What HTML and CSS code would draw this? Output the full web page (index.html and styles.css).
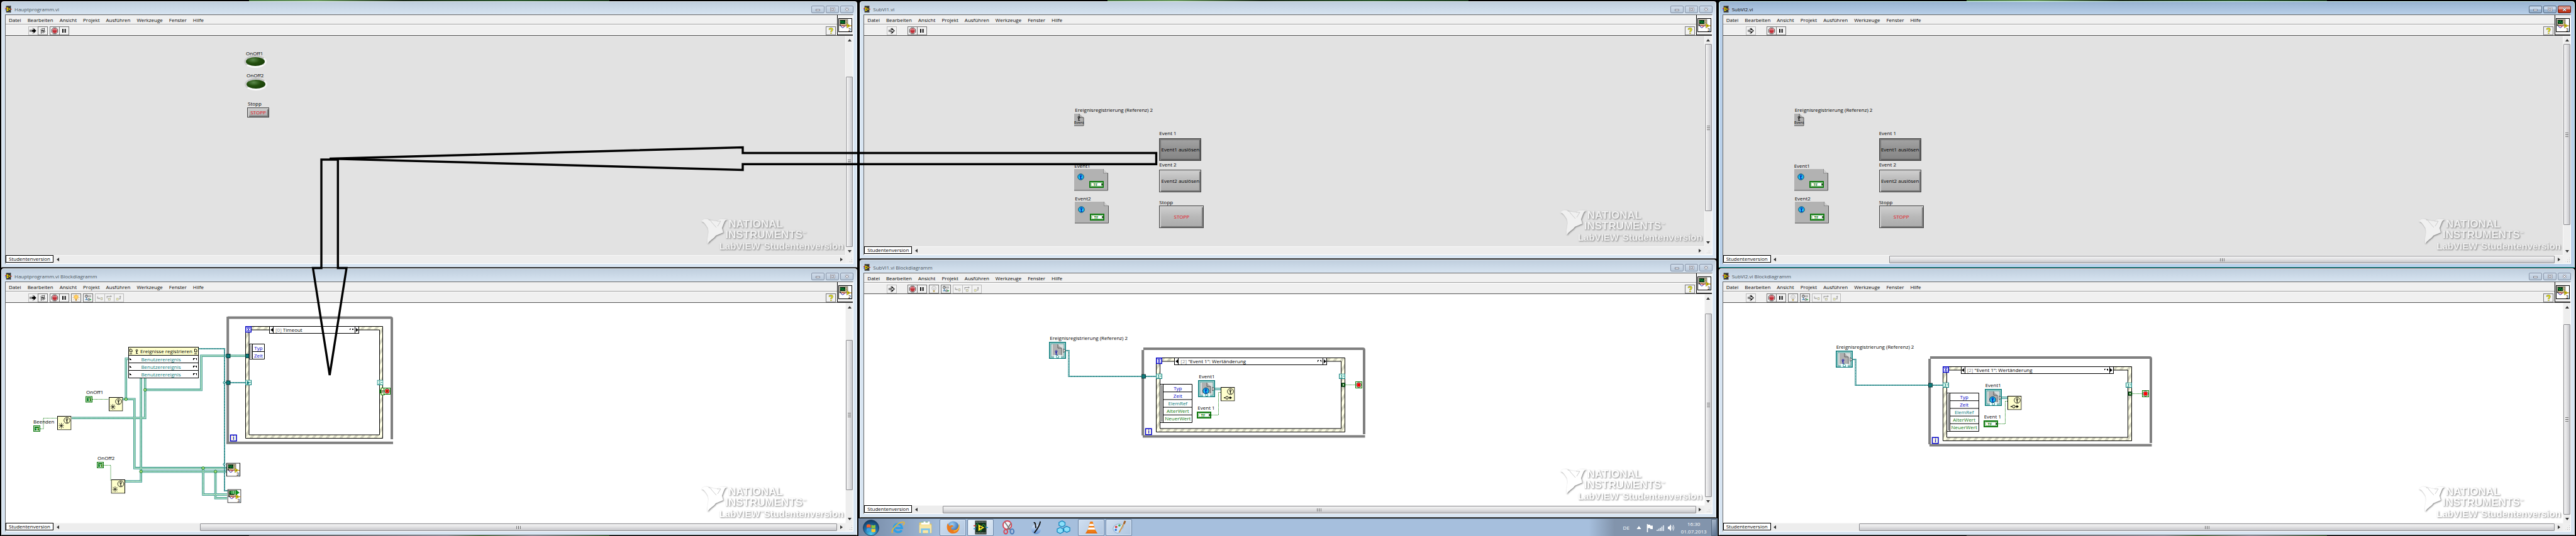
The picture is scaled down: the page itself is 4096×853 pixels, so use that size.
FILE: index.html
```html
<!DOCTYPE html>
<html lang="de">
<head>
<meta charset="utf-8">
<title>LabVIEW Desktop</title>
<link rel="stylesheet" href="styles.css">
</head>
<body>
<svg class="defs" aria-hidden="true">
  <defs>
    <pattern id="stripes" width="9" height="9" patternUnits="userSpaceOnUse" patternTransform="rotate(35)">
      <rect width="9" height="9" fill="#ffffe6"/><rect width="4" height="9" fill="#d6d6c2"/>
    </pattern>
    <radialGradient id="orb" cx=".5" cy=".9" r=".9"><stop offset="0" stop-color="#4fd0f0"/><stop offset=".5" stop-color="#1f6ea8"/><stop offset="1" stop-color="#12395f"/></radialGradient>
    <radialGradient id="globe" cx=".4" cy=".3" r=".8"><stop offset="0" stop-color="#9fd2f5"/><stop offset="1" stop-color="#1c50a0"/></radialGradient>
    <linearGradient id="wm" x1="0" y1="0" x2="0" y2="1"><stop offset="0" stop-color="#dbe9fa"/><stop offset="1" stop-color="#5f8fd0"/></linearGradient>
  </defs>
  <symbol id="logo" viewBox="0 0 10 10">
    <path d="M1.5 0h7v10h-7z" fill="#333"/><path d="M2 .6h6M2 9.4h6" stroke="#bbb" stroke-width=".7" stroke-dasharray=".8 .7"/>
    <path d="M2.5 2l5.5 3-5.5 3.2z" fill="#ffe600"/><path d="M0 4h2M8 5h2" stroke="#d22" stroke-width="1"/><path d="M0 6h2" stroke="#24d" stroke-width="1"/><path d="M3.4 5h2.6M4.7 3.8v2.4" stroke="#222" stroke-width=".8"/>
  </symbol>
  <symbol id="vi" viewBox="0 0 22 22">
    <rect x=".5" y=".5" width="21" height="21" fill="#fff" stroke="#000"/>
    <rect x="2" y="2" width="13" height="10" fill="#c8b890" stroke="#444" stroke-width=".6"/><rect x="3" y="3" width="8" height="6" fill="#021"/>
    <path d="M3 7l1.5-3 1.5 4 1.5-4 1.5 4L11 5" fill="none" stroke="#1c4" stroke-width=".7"/><path d="M12.5 4h1M12.5 6.5h1" stroke="#333"/>
    <path d="M3 10v2M2 11h2" stroke="#000" stroke-width=".8"/><path d="M4 12c1 4 5 4 6 0" fill="none" stroke="#22a"/><path d="M5 13l2-2 1 2 4-1" fill="none" stroke="#d22" stroke-width=".9"/>
    <path d="M13.500 8.500v7l6-3.500z" fill="#ffe600" stroke="#443" stroke-width=".5"/><path d="M19 12h2" stroke="#d80"/><path d="M14.500 12h2.400M15.700 11v2" stroke="#222" stroke-width=".6"/>
  </symbol>
  <symbol id="run" viewBox="0 0 15 14"><path d="M5 5h3V2l5 5-5 5V9H5z" fill="#000"/><path d="M1.500 5v4M3.500 5v4M6 2.500h1M6 11.500h1" stroke="#000"/></symbol>
  <symbol id="subrun" viewBox="0 0 15 14"><path d="M5 5.500h3V3l4.200 4L8 11V8.500H5" fill="#fff" stroke="#000" stroke-width="1.300"/><path d="M2.500 5v4M4.300 5v4M5.500 3h2M5.500 11.500h2" stroke="#000" stroke-width=".9"/></symbol>
  <symbol id="loop" viewBox="0 0 15 14"><path d="M4 6c0-3 3-4 5-2.500L10.500 2v4.500H6.500L8 5C7 4.500 6 5 6 6.500zM11.500 7.500c0 3-3 4-5 2.500L4.500 12V7.500H9L7.500 9c1 .5 2 0 2-1.500z" fill="#fff" stroke="#000" stroke-width=".8"/></symbol>
  <symbol id="abort" viewBox="0 0 15 14"><path d="M5 1.500h5l3 3v5l-3 3H5l-3-3v-5z" fill="#fff" stroke="#111" stroke-width=".9"/><path d="M5.500 2.700h4l2.200 2.200v4.200l-2.200 2.200h-4L3.300 9.100V4.900z" fill="#c03038"/><path d="M5.500 2.700h4l2.200 2.200V6H3.300V4.900z" fill="#d87078"/></symbol>
  <symbol id="pause" viewBox="0 0 15 14"><path d="M4 3.500h2.200v7H4zM8.300 3.500h2.200v7H8.300z" fill="#000"/></symbol>
  <symbol id="bulb" viewBox="0 0 15 14"><path d="M1.500 2l2 1.500M13.500 2l-2 1.500M1 6.500h2M12 6.500h2M2 10.500l2-1.500M13 10.500L11 9" stroke="#e8a030" stroke-width=".7"/><path d="M5.500 9C2 6 4 1.500 7.500 1.500S13 6 9.500 9z" fill="#ffcf60" stroke="#e09020" stroke-width=".6"/><path d="M6 9.500h3v3H6z" fill="#c09040"/></symbol>
  <symbol id="bulboff" viewBox="0 0 15 14"><path d="M5.500 9C2 6 4 1.500 7.500 1.500S13 6 9.500 9z" fill="#eee" stroke="#999" stroke-width=".7"/><path d="M6 9.500h3v3H6z" fill="#c0a860"/><path d="M6 4l1.500 4L9 4" fill="none" stroke="#aaa" stroke-width=".6"/></symbol>
  <symbol id="retain" viewBox="0 0 15 14"><circle cx="4.500" cy="4" r="2.300" fill="#fff" stroke="#111" stroke-width=".9"/><path d="M4.500 4V2.500M4.500 4h1.300" stroke="#111" stroke-width=".6"/><rect x="8.500" y="3" width="4" height="2.600" fill="#ccc" stroke="#777" stroke-width=".6"/><path d="M4.500 6.300v4M2 10.300h5" stroke="#16a" stroke-width="1"/><rect x="7.500" y="8.600" width="2.600" height="3" fill="#fff" stroke="#111" stroke-width=".7"/><path d="M10.500 10.200h1.500" stroke="#1a3" /><path d="M11.500 8.500l2.200 1.800-2.200 1.700z" fill="#1a3"/></symbol>
  <symbol id="into" viewBox="0 0 15 14"><path d="M3 4v4h3" fill="none" stroke="#999" stroke-width="1.200"/><path d="M5.500 6l2 2-2 2z" fill="#999"/><path d="M9 6.500h3v4H9z" fill="#f4f4c8" stroke="#999" stroke-width=".8"/></symbol>
  <symbol id="over" viewBox="0 0 15 14"><path d="M3 8V4h7" fill="none" stroke="#999" stroke-width="1.200"/><path d="M9.500 2l2.500 2-2.500 2z" fill="#999"/><path d="M5.500 7.500h3.500v4H5.500z" fill="#f4f4c8" stroke="#999" stroke-width=".8"/></symbol>
  <symbol id="out" viewBox="0 0 15 14"><path d="M3 7.500h3.500v4H3z" fill="#f4f4a8" stroke="#aaa" stroke-width=".8"/><path d="M7.500 9H10V5" fill="none" stroke="#999" stroke-width="1.200"/><path d="M8 5.500L10 3l2 2.500z" fill="#999"/></symbol>
  <symbol id="help" viewBox="0 0 15 14"><path d="M5 5c0-3.200 5.400-3.200 5.400 0 0 2-2.400 1.900-2.400 4M8 10.600v1.600" fill="none" stroke="#555" stroke-width="2.800"/><path d="M5 5c0-3.200 5.400-3.200 5.400 0 0 2-2.400 1.900-2.400 4M8 10.600v1.600" fill="none" stroke="#f4f000" stroke-width="1.800"/></symbol>
  <symbol id="ni" viewBox="0 0 42 40"><path d="M0 4C5-1 10 0 12 2l13 2C28 0 34 0 42 1 37 2 37 5 33 15l2 7-12 5c-3 5-8 6-13 13-2-9 4-17 0-26C7 9 4 5 0 4z"/><path d="M12 2c2 0 3 1 4 3l8 9M25 4h6l-5 8" fill="none" stroke="#ccc" stroke-width="1"/></symbol>
  <symbol id="min" viewBox="0 0 21 12"><rect x="7" y="6" width="7" height="2.500" fill="#fff" stroke="#556" stroke-width=".8"/></symbol>
  <symbol id="max" viewBox="0 0 21 12"><rect x="7.500" y="3.500" width="6.500" height="5" fill="none" stroke="#556" stroke-width="2.400"/><rect x="7.500" y="3.500" width="6.500" height="5" fill="none" stroke="#fff" stroke-width="1.200"/></symbol>
  <symbol id="cls" viewBox="0 0 21 12"><path d="M8 3.500l5.500 5.200M13.500 3.500L8 8.700" stroke="#556" stroke-width="2.800"/><path d="M8 3.500l5.500 5.200M13.500 3.500L8 8.700" stroke="#fff" stroke-width="1.500"/></symbol>
  <symbol id="ant" viewBox="0 0 8 9"><circle cx="4" cy="2.500" r="1.700" fill="none" stroke="currentColor" stroke-width=".9"/><path d="M4 2.500v5M2.500 8h3.500M2.600 5.500L4 4.500" stroke="currentColor" stroke-width="1" fill="none"/></symbol>
  <symbol id="create" viewBox="0 0 22.500 22.500"><rect x=".5" y=".5" width="21.500" height="21.500" fill="#ffffcc" stroke="#000"/><circle cx="15.500" cy="7" r="4.800" fill="none" stroke="#000" stroke-width=".8"/><use href="#ant" x="12" y="3" width="7" height="8"/><path d="M3 12l7 7M10 12l-7 7M6.500 11v9M2.500 15.500h8" stroke="#000" stroke-width=".7"/></symbol>
  <symbol id="fire" viewBox="0 0 22.500 22.500"><rect x=".5" y=".5" width="21.500" height="21.500" fill="#ffffcc" stroke="#000"/><circle cx="15.500" cy="7" r="4.800" fill="none" stroke="#000" stroke-width=".8"/><use href="#ant" x="12" y="3" width="7" height="8"/><path d="M5 17h2M13 17h3" stroke="#000" stroke-width="1.600"/><circle cx="10" cy="17" r="2.200" fill="none" stroke="#000"/><path d="M14.500 14.500l3.500 2.500-3.500 2.500z"/></symbol>
  <symbol id="refterm" viewBox="0 0 27 27"><rect x=".8" y=".8" width="25.400" height="25.400" fill="#d8f4f0" stroke="#0e7c7c" stroke-width="1.600"/><rect x="3" y="3" width="21" height="21" fill="#d8dcdc" stroke="#0e7c7c" stroke-width=".7"/><path d="M6 4h8l6 6v11H6z" fill="#b0b0b0"/><path d="M14 4v6h6v11" fill="none" stroke="#444" stroke-width=".8"/><path d="M23 11v6l3.500-3z" fill="#fff" stroke="#111" stroke-width=".7"/><rect x="8" y="21" width="11" height="5" fill="#e8ffff"/><path d="M12 21.500h2l1.500 1.500v2.500H12z" fill="#fff" stroke="#0e7c7c" stroke-width=".8"/></symbol>
  <symbol id="stopterm" viewBox="0 0 11 11"><rect x=".5" y=".5" width="10" height="10" fill="#ffffd8" stroke="#0a7a0a"/><circle cx="5.500" cy="5.500" r="3.900" fill="#fff" stroke="#111" stroke-width=".8"/><circle cx="5.500" cy="5.500" r="2.900" fill="#f00"/></symbol>
  <symbol id="glass" viewBox="0 0 10 10.500"><rect x=".8" y=".8" width="8.400" height="8.900" fill="#fff" stroke="#0000c8" stroke-width="1.500"/><path d="M3 2.800h4L3.200 7.800H7L3 2.800" fill="none" stroke="#0000c8" stroke-width=".9"/></symbol>
  <symbol id="dyn" viewBox="0 0 10 8.500"><rect x=".5" y=".5" width="9" height="7.500" fill="#e0fcf0" stroke="#0e7c7c"/><path d="M3 2.500h1.500v3.500M2.500 6.500h3M6.500 4h2" stroke="#0e7c7c" stroke-width=".9" fill="none"/></symbol>
  <symbol id="tf" viewBox="0 0 23 11"><rect x="1" y="1" width="21" height="9" fill="#fff" stroke="#107a10" stroke-width="2"/><rect x="3" y="2.800" width="17" height="5.400" fill="#fff" stroke="#107a10" stroke-width=".6"/><path d="M19.500 3.500v4l2-2z"/></symbol>
  <symbol id="evdiag" viewBox="0 0 520 160">
    <g fill="none" stroke="#0e7c7c" stroke-width="2.200"><path d="M27 14h4.500v41H170"/></g>
    <path d="M27 14h4.500v41H170" fill="none" stroke="#fff" stroke-width=".8" stroke-dasharray="1.500 1"/>
    <use href="#refterm" x="0" y="0" width="27" height="27"/>
    <path d="M150 11h349a2 2 0 0 1 2 2v134M149 150.500h353.500" fill="none" stroke="#808080" stroke-width="4"/><path d="M149.200 13v136" stroke="#808080" stroke-width="4"/>
    <path d="M170.500 25.500h300v118h-300zm6 5.500v107h288V31z" fill="url(#stripes)" fill-rule="evenodd" stroke="#000"/>
    <use href="#glass" x="170" y="25" width="10" height="10.500"/>
    <rect x="147.500" y="52" width="6" height="6" fill="#0e7c7c" stroke="#022" stroke-width=".8"/>
    <use href="#dyn" x="170" y="50.500" width="10" height="8.500"/><use href="#dyn" x="461" y="50.500" width="10" height="8.500"/>
    <rect x="465" y="65.500" width="6" height="6" fill="#0a5a0a" stroke="#022" stroke-width=".6"/><rect x="467" y="67.500" width="2" height="2" fill="#fff"/>
    <path d="M471 68.500h17" stroke="#0a7a0a" stroke-dasharray="1 1"/><use href="#stopterm" x="487" y="63" width="11" height="11"/>
    <path d="M176.500 67.500h51v61h-51z" fill="#fff" stroke="#000"/><path d="M178 69h2.500v58H178z" fill="#999"/><path d="M181.500 67.500v61M181.500 79.700h46M181.500 91.900h46M181.500 104.100h46M181.500 116.300h46" stroke="#000"/>
    <path d="M264 75h11" stroke="#0e7c7c" stroke-width="3.400"/><path d="M264 75h11" stroke="#c8f0e4" stroke-width="1.600"/>
    <use href="#refterm" x="237" y="61" width="27" height="27"/><circle cx="249.500" cy="78" r="4.800" fill="#1bb8ee" stroke="#046"/>
    <g color="#00a"><use href="#ant" x="246" y="74" width="7" height="8"/><use href="#ant" x="8" y="13" width="7" height="8"/></g>
    <use href="#fire" x="273" y="72" width="22.500" height="22.500"/>
    <path d="M258 116.500h11.500v-36h4" fill="none" stroke="#0a7a0a" stroke-dasharray="1 1"/><use href="#tf" x="235" y="111" width="23" height="11"/>
    <rect x="153.500" y="138.200" width="9.500" height="9.500" fill="#ffffe6" stroke="#0000c8" stroke-width="1.500"/>
  </symbol>
</svg>

<main class="desktop">
  <section class="monitor">
    <article class="window">
      <header class="title"><svg class="logo"><use href="#logo"/></svg><h2>Hauptprogramm.vi</h2><button class="ctl" aria-label="Minimieren"><svg><use href="#min"/></svg></button><button class="ctl" aria-label="Maximieren"><svg><use href="#max"/></svg></button><button class="ctl" aria-label="Schließen"><svg><use href="#cls"/></svg></button></header>
      <div class="frame">
        <div class="bars"><div class="left">
          <nav class="menu"><button>Datei</button><button>Bearbeiten</button><button>Ansicht</button><button>Projekt</button><button>Ausführen</button><button>Werkzeuge</button><button>Fenster</button><button>Hilfe</button></nav>
          <div class="tools"><button class="tool pale" aria-label="Ausführen"><svg><use href="#run"/></svg></button><button class="tool" aria-label="Wiederholt ausführen"><svg><use href="#loop"/></svg></button><button class="tool gap" aria-label="Abbrechen"><svg><use href="#abort"/></svg></button><button class="tool" aria-label="Pause"><svg><use href="#pause"/></svg></button><button class="tool help" aria-label="Kontexthilfe"><svg><use href="#help"/></svg></button></div>
        </div><div class="pane"><svg class="vi" viewBox="0 0 22 22"><use href="#vi"/><text x="16" y="20.500" class="digit">2</text></svg></div></div>
        <div class="body">
          <div class="canvas panel">
            <label class="lbl" for="led1" style="left:382px;top:23px">OnOff1</label><input class="led" type="checkbox" id="led1" style="left:379px;top:31px">
            <label class="lbl" for="led2" style="left:383px;top:58px">OnOff2</label><input class="led" type="checkbox" id="led2" style="left:380px;top:67px">
            <span class="lbl" style="left:385px;top:103px">Stopp</span><button class="push stop small" style="left:384px;top:114px">STOPP</button>
            <div class="mark"><svg><use href="#ni"/></svg><div class="brand"><b>NATIONAL</b><b>INSTRUMENTS<sup>™</sup></b></div><b class="edition">LabVIEW<sup>™</sup>Studentenversion</b></div>
          </div>
          <div class="vbar"><i class="up"></i><div class="track" style="grid-template-rows:52fr 272fr 0fr"><i class="thumb"></i></div><i class="down"></i></div>
        </div>
        <div class="foot"><span class="student">Studentenversion</span><div class="hbar"><i class="back"></i><div class="track"></div><i class="fwd"></i></div><i class="grip"></i></div>
      </div>
    </article>

    <article class="window">
      <header class="title"><svg class="logo"><use href="#logo"/></svg><h2>Hauptprogramm.vi Blockdiagramm</h2><button class="ctl" aria-label="Minimieren"><svg><use href="#min"/></svg></button><button class="ctl" aria-label="Maximieren"><svg><use href="#max"/></svg></button><button class="ctl" aria-label="Schließen"><svg><use href="#cls"/></svg></button></header>
      <div class="frame">
        <div class="bars"><div class="left">
          <nav class="menu"><button>Datei</button><button>Bearbeiten</button><button>Ansicht</button><button>Projekt</button><button>Ausführen</button><button>Werkzeuge</button><button>Fenster</button><button>Hilfe</button></nav>
          <div class="tools"><button class="tool pale" aria-label="Ausführen"><svg><use href="#run"/></svg></button><button class="tool" aria-label="Wiederholt ausführen"><svg><use href="#loop"/></svg></button><button class="tool gap" aria-label="Abbrechen"><svg><use href="#abort"/></svg></button><button class="tool" aria-label="Pause"><svg><use href="#pause"/></svg></button><button class="tool gap" aria-label="Highlight"><svg><use href="#bulb"/></svg></button><button class="tool gap" aria-label="Werte beibehalten"><svg><use href="#retain"/></svg></button><button class="tool gap pale" aria-label="Hineinspringen"><svg><use href="#into"/></svg></button><button class="tool pale" aria-label="Überspringen"><svg><use href="#over"/></svg></button><button class="tool pale" aria-label="Herausspringen"><svg><use href="#out"/></svg></button><button class="tool help" aria-label="Kontexthilfe"><svg><use href="#help"/></svg></button></div>
        </div><div class="pane"><svg class="vi" viewBox="0 0 22 22"><use href="#vi"/><text x="16" y="20.500" class="digit">2</text></svg></div></div>
        <div class="body">
          <div class="canvas diagram">
            <svg class="wires" width="630" height="330">
              <g fill="none" stroke-linejoin="miter">
                <g stroke="#2a8f8a" stroke-width="3.600"><path id="w1" d="M186 153.300h18.800v109.600H351M196 89h-4.700v64.300"/><path d="M105 183.200h116.700V119M221.700 138.400H311V84.200h41M357 84.200h24"/><path d="M190 284h25.200V119M215.200 268.400H351M314 263v42h38M333.600 268.400v42.400H352"/></g>
                <g stroke="#c4ecd8" stroke-width="2"><path d="M186 153.300h18.800v109.600H351M196 89h-4.700v64.300"/><path d="M105 183.200h116.700V119M221.700 138.400H311V84.200h41M357 84.200h24"/><path d="M190 284h25.200V119M215.200 268.400H351M314 263v42h38M333.600 268.400v42.400H352"/></g>
                <g stroke="#2c8f50" stroke-width=".8" stroke-dasharray="1 1"><path d="M186 153.300h18.800v109.600H351M196 89h-4.700v64.300"/><path d="M105 183.200h116.700V119M221.700 138.400H311V84.200h41M357 84.200h24"/><path d="M190 284h25.200V119M215.200 268.400H351M314 263v42h38M333.600 268.400v42.400H352"/></g>
                <path d="M307 73h41v226h5M348 127h34" stroke="#0e7c7c" stroke-width="2"/><path d="M307 73h41v226h5M348 127h34" stroke="#fff" stroke-width=".8" stroke-dasharray="1.500 1"/>
                <path d="M138 153.500h26M55 200.500h5v-17h23M156 258.500h11v25" stroke="#0a7a0a" stroke-dasharray="1 1"/>
              </g>
              <g fill="#9fdc70" stroke="#1c7a40" stroke-width=".9"><circle cx="191.300" cy="153.300" r="2.300"/><circle cx="221.700" cy="138.400" r="2.300"/><circle cx="215.200" cy="268.400" r="2.300"/><circle cx="314" cy="263" r="2.300"/><circle cx="333.600" cy="268.400" r="2.300"/></g>
              <g fill="#bfe6e0" stroke="#0e7c7c"><circle cx="347.500" cy="127" r="1.600"/><circle cx="347.500" cy="257" r="1.600"/></g>
              <path d="M353.200 22v201M351 222.700h265M353 23.500h259a2 2 0 0 1 2 2V217" fill="none" stroke="#808080" stroke-width="4"/>
              <path d="M381.500 37.500h218v178h-218zm5.500 5.500v167h207.500V43z" fill="url(#stripes)" fill-rule="evenodd" stroke="#000"/>
              <use href="#glass" x="381" y="37" width="10" height="10.500"/>
              <g fill="#0e7c7c" stroke="#022" stroke-width=".8"><rect x="351" y="81.400" width="6" height="6"/><rect x="351" y="124" width="6" height="6"/><rect x="381.500" y="81.400" width="5.500" height="6"/></g>
              <use href="#dyn" x="381" y="122.500" width="10" height="8.500"/><path d="M383.500 125h2l2.500 2-2.500 2h-2z" fill="#0e7c7c"/><use href="#dyn" x="590.500" y="122.500" width="10" height="8.500"/>
              <rect x="594" y="138" width="3" height="6" fill="#0a5a0a"/><rect x="597" y="135.500" width="5" height="11" fill="#ffffd8" stroke="#0a7a0a"/><use href="#stopterm" x="601" y="135" width="11" height="11"/><circle cx="606.500" cy="140.500" r="1" fill="#0a7a0a"/>
              <text x="597.500" y="144" class="t8">F</text>
              <rect x="357.500" y="210.300" width="9.500" height="9.500" fill="#ffffe6" stroke="#0000c8" stroke-width="1.500"/><text x="361" y="218" class="t8 blue">i</text>
              <path d="M387.500 65.500h24v24h-24z" fill="#fff" stroke="#000"/><path d="M389 67h2.500v21H389z" fill="#999"/><path d="M392.500 65.500v24M392.500 77.500h19" stroke="#000"/>
              <g fill="#107a10"><rect x="127" y="148.500" width="11" height="10"/><rect x="44" y="195" width="11" height="10"/><rect x="145" y="253" width="11" height="10"/></g>
              <g fill="none" stroke="#fff" stroke-width=".8"><rect x="128.700" y="150" width="7.600" height="7"/><rect x="45.700" y="196.500" width="7.600" height="7"/><rect x="146.700" y="254.500" width="7.600" height="7"/></g>
              <text x="130.400" y="156.300" class="tc">T</text><text x="47.400" y="202.800" class="tc">T</text><text x="148.400" y="260.800" class="tc">T</text>
              <use href="#create" x="164" y="150" width="22.500" height="22.500"/><use href="#create" x="82" y="180" width="22.500" height="22.500"/><use href="#create" x="167.500" y="281" width="22.500" height="22.500"/>
              <use href="#vi" x="351" y="254.500" width="22" height="22"/><text x="367" y="275" class="digit">3</text>
              <use href="#vi" x="352.500" y="296.500" width="22" height="22"/><path d="M358 299h8v-1.500l6 4.500-6 4v-2h-8z" fill="#0a8a1a"/><path d="M360 299v5M362.500 299v5M365 299v5" stroke="#fff" stroke-width=".8"/><text x="368.500" y="317" class="digit">3</text>
            </svg>
            <span class="lbl" style="left:128px;top:137px">OnOff1</span><span class="lbl" style="left:44px;top:184px">Beenden</span><span class="lbl" style="left:146px;top:242px">OnOff2</span>
            <div class="node" style="left:195px;top:70px">
              <div class="nodehead"><svg class="mini"><path d="M1.500 1.500h2l1.500 1.500v3H1.500zM2 8v2M4 8v2" fill="none" stroke="#000"/></svg><svg class="mini"><use href="#ant"/></svg><span>Ereignisse registrieren</span><svg class="mini"><path d="M1.500 1.500h2l1.500 1.500v3H1.500zM2 8v2M4 8v2" fill="none" stroke="#000"/></svg></div>
              <select aria-label="Ereignis 1"><option>Benutzerereignis</option></select><select aria-label="Ereignis 2"><option>Benutzerereignis</option></select><select aria-label="Ereignis 3"><option>Benutzerereignis</option></select>
            </div>
            <div class="case" style="left:419px;top:37px;width:143px"><button class="prev" aria-label="Zurück"></button><label for="c1">[0]</label><select id="c1"><option>Timeout</option></select><button class="next" aria-label="Weiter"></button></div>
            <div class="data" style="left:393px;top:66px;width:18px"><span>Typ</span><span>Zeit</span></div>
            <div class="mark"><svg><use href="#ni"/></svg><div class="brand"><b>NATIONAL</b><b>INSTRUMENTS<sup>™</sup></b></div><b class="edition">LabVIEW<sup>™</sup>Studentenversion</b></div>
          </div>
          <div class="vbar"><i class="up"></i><div class="track" style="grid-template-rows:46fr 240fr 39fr"><i class="thumb"></i></div><i class="down"></i></div>
        </div>
        <div class="foot"><span class="student">Studentenversion</span><div class="hbar"><i class="back"></i><div class="track" style="grid-template-columns:221fr 1016fr 0fr"><i class="thumb"></i></div><i class="fwd"></i></div><i class="grip"></i></div>
      </div>
    </article>
  </section>

  <section class="monitor with-taskbar">
    <article class="window">
      <header class="title"><svg class="logo"><use href="#logo"/></svg><h2>SubVI1.vi</h2><button class="ctl" aria-label="Minimieren"><svg><use href="#min"/></svg></button><button class="ctl" aria-label="Maximieren"><svg><use href="#max"/></svg></button><button class="ctl" aria-label="Schließen"><svg><use href="#cls"/></svg></button></header>
      <div class="frame">
        <div class="bars"><div class="left">
          <nav class="menu"><button>Datei</button><button>Bearbeiten</button><button>Ansicht</button><button>Projekt</button><button>Ausführen</button><button>Werkzeuge</button><button>Fenster</button><button>Hilfe</button></nav>
          <div class="tools"><button class="tool pale" aria-label="Ausführen"><svg><use href="#subrun"/></svg></button><button class="tool wide" aria-label="Abbrechen"><svg><use href="#abort"/></svg></button><button class="tool" aria-label="Pause"><svg><use href="#pause"/></svg></button><button class="tool help" aria-label="Kontexthilfe"><svg><use href="#help"/></svg></button></div>
        </div><div class="pane"><svg class="vi" viewBox="0 0 22 22"><use href="#vi"/><text x="16" y="20.500" class="digit">3</text></svg></div></div>
        <div class="body">
          <div class="canvas panel">
            <div class="group" style="left:334px;top:113px">
              <span class="lbl" style="left:1px;top:0px">Ereignisregistrierung (Referenz) 2</span>
              <svg class="abs" style="left:0px;top:11px" width="16" height="20"><path d="M0 0h8l7 6v13H0z" fill="#b0b0b0"/><path d="M8 0v6h7v13H0" fill="none" stroke="#555"/><use href="#ant" x="4" y="3" width="7" height="9"/><text x="0" y="16" class="t5">Event</text></svg>
              <span class="lbl" style="left:135px;top:37px">Event 1</span><button class="push dark" style="left:135px;top:50px">Event1 auslösen</button>
              <span class="lbl" style="left:135px;top:87px">Event 2</span><button class="push" style="left:135px;top:100px">Event2 auslösen</button>
              <span class="lbl" style="left:135px;top:147px">Stopp</span><button class="push stop" style="left:135px;top:157px">STOPP</button>
              <span class="lbl" style="left:0px;top:89px">Event1</span>
              <svg class="abs" style="left:0px;top:99px" width="54" height="35"><path d="M0 0h46l7 7v27H0z" fill="#b2b2b2"/><path d="M46.500 0v6.500H53.500V34H0" fill="none" stroke="#555"/><path d="M46.500 0v6.500H53z" fill="#ccc"/><circle cx="10.500" cy="12.500" r="4.700" fill="#1bc0f4" stroke="#046"/><g color="#00a"><use href="#ant" x="7" y="8.500" width="7" height="8"/></g><use href="#tf" x="24" y="19" width="23" height="11"/><text x="30.500" y="27.300" class="tft">TF</text></svg>
              <span class="lbl" style="left:1px;top:141px">Event2</span>
              <svg class="abs" style="left:1px;top:151px" width="54" height="35"><path d="M0 0h46l7 7v27H0z" fill="#b2b2b2"/><path d="M46.500 0v6.500H53.500V34H0" fill="none" stroke="#555"/><path d="M46.500 0v6.500H53z" fill="#ccc"/><circle cx="10.500" cy="12.500" r="4.700" fill="#1bc0f4" stroke="#046"/><g color="#00a"><use href="#ant" x="7" y="8.500" width="7" height="8"/></g><use href="#tf" x="24" y="19" width="23" height="11"/><text x="30.500" y="27.300" class="tft">TF</text></svg>
            </div>
            <div class="mark"><svg><use href="#ni"/></svg><div class="brand"><b>NATIONAL</b><b>INSTRUMENTS<sup>™</sup></b></div><b class="edition">LabVIEW<sup>™</sup>Studentenversion</b></div>
          </div>
          <div class="vbar"><i class="up"></i><div class="track" style="grid-template-rows:0fr 267fr 43fr"><i class="thumb"></i></div><i class="down"></i></div>
        </div>
        <div class="foot"><span class="student">Studentenversion</span><div class="hbar"><i class="back"></i><div class="track"></div><i class="fwd"></i></div><i class="grip"></i></div>
      </div>
    </article>

    <article class="window">
      <header class="title"><svg class="logo"><use href="#logo"/></svg><h2>SubVI1.vi Blockdiagramm</h2><button class="ctl" aria-label="Minimieren"><svg><use href="#min"/></svg></button><button class="ctl" aria-label="Maximieren"><svg><use href="#max"/></svg></button><button class="ctl" aria-label="Schließen"><svg><use href="#cls"/></svg></button></header>
      <div class="frame">
        <div class="bars"><div class="left">
          <nav class="menu"><button>Datei</button><button>Bearbeiten</button><button>Ansicht</button><button>Projekt</button><button>Ausführen</button><button>Werkzeuge</button><button>Fenster</button><button>Hilfe</button></nav>
          <div class="tools"><button class="tool pale" aria-label="Ausführen"><svg><use href="#subrun"/></svg></button><button class="tool wide" aria-label="Abbrechen"><svg><use href="#abort"/></svg></button><button class="tool" aria-label="Pause"><svg><use href="#pause"/></svg></button><button class="tool gap" aria-label="Highlight"><svg><use href="#bulboff"/></svg></button><button class="tool gap" aria-label="Werte beibehalten"><svg><use href="#retain"/></svg></button><button class="tool gap pale" aria-label="Hineinspringen"><svg><use href="#into"/></svg></button><button class="tool pale" aria-label="Überspringen"><svg><use href="#over"/></svg></button><button class="tool pale" aria-label="Herausspringen"><svg><use href="#out"/></svg></button><button class="tool help" aria-label="Kontexthilfe"><svg><use href="#help"/></svg></button></div>
        </div><div class="pane"><svg class="vi" viewBox="0 0 22 22"><use href="#vi"/><text x="16" y="20.500" class="digit">3</text></svg></div></div>
        <div class="body">
          <div class="canvas diagram">
            <div class="group" style="left:294px;top:76px">
              <svg class="abs" width="520" height="160"><use href="#evdiag" width="520" height="160"/><text x="157.200" y="146" class="t8 blue">i</text><text x="241.500" y="119.300" class="tft">TF</text></svg>
              <span class="lbl" style="left:1px;top:-11px">Ereignisregistrierung (Referenz) 2</span><span class="lbl" style="left:238px;top:50px">Event1</span><span class="lbl" style="left:236px;top:100px">Event 1</span>
              <div class="case" style="left:199px;top:25px;width:243px"><button class="prev" aria-label="Zurück"></button><label for="c2">[2]</label><select id="c2"><option>"Event 1": Wertänderung</option></select><button class="next" aria-label="Weiter"></button></div>
              <div class="data" style="left:182px;top:68px;width:45px"><span>Typ</span><span>Zeit</span><span class="teal">ElemRef</span><span class="green">AlterWert</span><span class="green">NeuerWert</span></div>
            </div>
            <div class="mark"><svg><use href="#ni"/></svg><div class="brand"><b>NATIONAL</b><b>INSTRUMENTS<sup>™</sup></b></div><b class="edition">LabVIEW<sup>™</sup>Studentenversion</b></div>
          </div>
          <div class="vbar"><i class="up"></i><div class="track" style="grid-template-rows:18fr 293fr 0fr"><i class="thumb"></i></div><i class="down"></i></div>
        </div>
        <div class="foot"><span class="student">Studentenversion</span><div class="hbar"><i class="back"></i><div class="track" style="grid-template-columns:36fr 1201fr 0fr"><i class="thumb"></i></div><i class="fwd"></i></div><i class="grip"></i></div>
      </div>
    </article>

    <footer class="taskbar">
      <button class="task start" aria-label="Start"><svg viewBox="0 0 24 24"><circle cx="12" cy="12" r="11.500" fill="url(#orb)" stroke="#1c3a58" stroke-width=".8"/><path d="M5.500 7.500c2-1 4-1 6 0v4.500c-2-1-4-1-6 0z" fill="#f0602a"/><path d="M12.500 7.700c2 1 4 1 6 0v4.500c-2 1-4 1-6 0z" fill="#8cc63c"/><path d="M5.500 13c2-1 4-1 6 0v4.500c-2-1-4-1-6 0z" fill="#3c9ce0"/><path d="M12.500 13.200c2 1 4 1 6 0v4.500c-2 1-4 1-6 0z" fill="#fcc82c"/></svg></button>
      <button class="task" aria-label="Internet Explorer"><svg viewBox="0 0 24 24"><path d="M18.500 16.500c-3 5-13 4-13-4s12.500-9 13.500.5H8" fill="none" stroke="#2c9fe8" stroke-width="3.400"/><path d="M3 21C0 17 12 2 22 3c2 1 0 4-1 5" fill="none" stroke="#f0b828" stroke-width="1.600"/></svg></button>
      <button class="task" aria-label="Explorer"><svg viewBox="0 0 24 24"><path d="M2 4h6l2 2h12v15H2z" fill="#f4dc88" stroke="#d8b850" stroke-width=".6"/><path d="M5 2h14v5H5z" fill="#fff"/><path d="M5 3h4M12 3h4" stroke="#3a8a3a"/><path d="M2 8h20v13H2z" fill="#f8e6a4"/><path d="M6 22v-7h12v7" fill="none" stroke="#7cc4ec" stroke-width="3"/></svg></button>
      <button class="task open" aria-label="Firefox"><svg viewBox="0 0 24 24"><circle cx="12" cy="11" r="9.500" fill="url(#globe)"/><path d="M3 5c-4 10 2 17 9 17 8 0 12-7 10-15-1 6-5 10-9 9-4 0-6-3-3-5l3-1c-2-3-6-2-6 0-2-1-3-3-4-5z" fill="#ec7a1c"/><path d="M22 7c1 6-4 11-9 11" fill="none" stroke="#fcc030" stroke-width="1.500"/></svg></button>
      <button class="task open active" aria-label="LabVIEW"><svg viewBox="0 0 24 24"><rect x="3" y="1" width="18" height="22" fill="#14301c" stroke="#555"/><path d="M4 3h16M4 21h16" stroke="#999" stroke-width="2" stroke-dasharray="1.500 1"/><path d="M4 12c2-10 4-8 5 0s4 8 5 0 4-6 6 0" fill="none" stroke="#2cb44c"/><path d="M8 7l10 5-10 6z" fill="#ffe820"/><path d="M0 9h4" stroke="#d22" stroke-width="1.500"/><path d="M0 14h4M20 12h4" stroke="#28c" stroke-width="1.500"/><path d="M10 12h4M12 10v4" stroke="#222"/></svg></button>
      <button class="task" aria-label="Snipping Tool"><svg viewBox="0 0 24 24"><circle cx="10" cy="8" r="7" fill="#f4f4f8" stroke="#d84858" stroke-width="2"/><path d="M6 3l9 13M16 5L9 17" stroke="#777" stroke-width="1.800"/><ellipse cx="7.500" cy="19" rx="3" ry="3.500" fill="none" stroke="#d84858" stroke-width="2"/><ellipse cx="18" cy="18.500" rx="3" ry="4" fill="none" stroke="#4878b8" stroke-width="2"/></svg></button>
      <button class="task" aria-label="yEd"><svg viewBox="0 0 24 24"><circle cx="12" cy="15" r="8" fill="url(#wm)"/><path d="M8 4c3-1 3 4 3.500 9M19 2c-1 7-6 14-10 19" fill="none" stroke="#111" stroke-width="2"/></svg></button>
      <button class="task" aria-label="Waben"><svg viewBox="0 0 24 24"><g fill="#8ce0fa" stroke="#1888c0" stroke-width="1.400"><path d="M9 1l5 2.500v5L9 11 4 8.500v-5z"/><path d="M6 12l5 2.500v5L6 22l-5-2.500v-5z"/><path d="M17 10l5 2.500v5L17 20l-5-2.500v-5z"/></g></svg></button>
      <button class="task open" aria-label="VLC"><svg viewBox="0 0 24 24"><path d="M5 17h14l3 5H2z" fill="#e87010"/><path d="M10 2h4l5 16c-3 2-11 2-14 0z" fill="#f08018"/><path d="M9 6h6l1.200 3.500H7.800zM7 12h10l1 3.500H6z" fill="#fff"/></svg></button>
      <button class="task open" aria-label="Paint"><svg viewBox="0 0 24 24"><path d="M2 14C2 5 18 3 19 11c0 4-4 1-5 5s-3 6-6 5-6-3-6-7z" fill="#cfe4f6" stroke="#7a9cc0" stroke-width=".8"/><circle cx="7" cy="11" r="2" fill="#d83a3a"/><circle cx="12.500" cy="8.500" r="1.800" fill="#38a848"/><circle cx="6.500" cy="16" r="1.800" fill="#2868d0"/><path d="M12 20L21 4" stroke="#d09850" stroke-width="2"/><path d="M20 6l2-5" stroke="#a06028" stroke-width="3"/></svg></button>
      <div class="tray"><span>DE</span><svg viewBox="0 0 10 16"><path d="M5 5l3.500 5h-7z" fill="#fff"/></svg><svg viewBox="0 0 12 16"><path d="M2.500 2v13" stroke="#fff" stroke-width="1.600"/><path d="M3 3h4v1.500h4V10H7V8.500H3z" fill="#fff"/></svg><svg viewBox="0 0 12 16"><path d="M1 11v2M3.500 9.500V13M6 8v5M8.500 6v7M11 4v9" stroke="#e8eef6" stroke-width="1.600"/></svg><svg viewBox="0 0 12 16"><path d="M1 6h2l3-3.500v11L3 10H1z" fill="#fff"/><path d="M7.500 5.500q1.500 2.500 0 5M9.300 3.500q3 4.500 0 9" stroke="#fff" fill="none"/></svg><div class="clock"><time>16:30</time><time>01.07.2013</time></div></div>
      <button class="peek" aria-label="Desktop anzeigen"></button>
    </footer>
  </section>

  <section class="monitor">
    <article class="window focused">
      <header class="title"><svg class="logo"><use href="#logo"/></svg><h2>SubVI2.vi</h2><button class="ctl" aria-label="Minimieren"><svg><use href="#min"/></svg></button><button class="ctl" aria-label="Maximieren"><svg><use href="#max"/></svg></button><button class="ctl close" aria-label="Schließen"><svg><use href="#cls"/></svg></button></header>
      <div class="frame">
        <div class="bars"><div class="left">
          <nav class="menu"><button>Datei</button><button>Bearbeiten</button><button>Ansicht</button><button>Projekt</button><button>Ausführen</button><button>Werkzeuge</button><button>Fenster</button><button>Hilfe</button></nav>
          <div class="tools"><button class="tool pale" aria-label="Ausführen"><svg><use href="#subrun"/></svg></button><button class="tool wide" aria-label="Abbrechen"><svg><use href="#abort"/></svg></button><button class="tool" aria-label="Pause"><svg><use href="#pause"/></svg></button><button class="tool help" aria-label="Kontexthilfe"><svg><use href="#help"/></svg></button></div>
        </div><div class="pane"><svg class="vi" viewBox="0 0 22 22"><use href="#vi"/><text x="16" y="20.500" class="digit">3</text></svg></div></div>
        <div class="body">
          <div class="canvas panel">
            <div class="group" style="left:113px;top:113px">
              <span class="lbl" style="left:1px;top:0px">Ereignisregistrierung (Referenz) 2</span>
              <svg class="abs" style="left:0px;top:11px" width="16" height="20"><path d="M0 0h8l7 6v13H0z" fill="#b0b0b0"/><path d="M8 0v6h7v13H0" fill="none" stroke="#555"/><use href="#ant" x="4" y="3" width="7" height="9"/><text x="0" y="16" class="t5">Event</text></svg>
              <span class="lbl" style="left:135px;top:37px">Event 1</span><button class="push dark" style="left:135px;top:50px">Event1 auslösen</button>
              <span class="lbl" style="left:135px;top:87px">Event 2</span><button class="push" style="left:135px;top:100px">Event2 auslösen</button>
              <span class="lbl" style="left:135px;top:147px">Stopp</span><button class="push stop" style="left:135px;top:157px">STOPP</button>
              <span class="lbl" style="left:0px;top:89px">Event1</span>
              <svg class="abs" style="left:0px;top:99px" width="54" height="35"><path d="M0 0h46l7 7v27H0z" fill="#b2b2b2"/><path d="M46.500 0v6.500H53.500V34H0" fill="none" stroke="#555"/><path d="M46.500 0v6.500H53z" fill="#ccc"/><circle cx="10.500" cy="12.500" r="4.700" fill="#1bc0f4" stroke="#046"/><g color="#00a"><use href="#ant" x="7" y="8.500" width="7" height="8"/></g><use href="#tf" x="24" y="19" width="23" height="11"/><text x="30.500" y="27.300" class="tft">TF</text></svg>
              <span class="lbl" style="left:1px;top:141px">Event2</span>
              <svg class="abs" style="left:1px;top:151px" width="54" height="35"><path d="M0 0h46l7 7v27H0z" fill="#b2b2b2"/><path d="M46.500 0v6.500H53.500V34H0" fill="none" stroke="#555"/><path d="M46.500 0v6.500H53z" fill="#ccc"/><circle cx="10.500" cy="12.500" r="4.700" fill="#1bc0f4" stroke="#046"/><g color="#00a"><use href="#ant" x="7" y="8.500" width="7" height="8"/></g><use href="#tf" x="24" y="19" width="23" height="11"/><text x="30.500" y="27.300" class="tft">TF</text></svg>
            </div>
            <div class="mark"><svg><use href="#ni"/></svg><div class="brand"><b>NATIONAL</b><b>INSTRUMENTS<sup>™</sup></b></div><b class="edition">LabVIEW<sup>™</sup>Studentenversion</b></div>
          </div>
          <div class="vbar"><i class="up"></i><div class="track" style="grid-template-rows:0fr 289fr 35fr"><i class="thumb"></i></div><i class="down"></i></div>
        </div>
        <div class="foot"><span class="student">Studentenversion</span><div class="hbar"><i class="back"></i><div class="track" style="grid-template-columns:176fr 1061fr 0fr"><i class="thumb"></i></div><i class="fwd"></i></div><i class="grip"></i></div>
      </div>
    </article>

    <article class="window">
      <header class="title"><svg class="logo"><use href="#logo"/></svg><h2>SubVI2.vi Blockdiagramm</h2><button class="ctl" aria-label="Minimieren"><svg><use href="#min"/></svg></button><button class="ctl" aria-label="Maximieren"><svg><use href="#max"/></svg></button><button class="ctl" aria-label="Schließen"><svg><use href="#cls"/></svg></button></header>
      <div class="frame">
        <div class="bars"><div class="left">
          <nav class="menu"><button>Datei</button><button>Bearbeiten</button><button>Ansicht</button><button>Projekt</button><button>Ausführen</button><button>Werkzeuge</button><button>Fenster</button><button>Hilfe</button></nav>
          <div class="tools"><button class="tool pale" aria-label="Ausführen"><svg><use href="#subrun"/></svg></button><button class="tool wide" aria-label="Abbrechen"><svg><use href="#abort"/></svg></button><button class="tool" aria-label="Pause"><svg><use href="#pause"/></svg></button><button class="tool gap" aria-label="Highlight"><svg><use href="#bulboff"/></svg></button><button class="tool gap" aria-label="Werte beibehalten"><svg><use href="#retain"/></svg></button><button class="tool gap pale" aria-label="Hineinspringen"><svg><use href="#into"/></svg></button><button class="tool pale" aria-label="Überspringen"><svg><use href="#over"/></svg></button><button class="tool pale" aria-label="Herausspringen"><svg><use href="#out"/></svg></button><button class="tool help" aria-label="Kontexthilfe"><svg><use href="#help"/></svg></button></div>
        </div><div class="pane"><svg class="vi" viewBox="0 0 22 22"><use href="#vi"/><text x="16" y="20.500" class="digit">3</text></svg></div></div>
        <div class="body">
          <div class="canvas diagram">
            <div class="group" style="left:179px;top:76px">
              <svg class="abs" width="520" height="160"><use href="#evdiag" width="520" height="160"/><text x="157.200" y="146" class="t8 blue">i</text><text x="241.500" y="119.300" class="tft">TF</text></svg>
              <span class="lbl" style="left:1px;top:-11px">Ereignisregistrierung (Referenz) 2</span><span class="lbl" style="left:238px;top:50px">Event1</span><span class="lbl" style="left:236px;top:100px">Event 1</span>
              <div class="case" style="left:199px;top:25px;width:243px"><button class="prev" aria-label="Zurück"></button><label for="c3">[2]</label><select id="c3"><option>"Event 1": Wertänderung</option></select><button class="next" aria-label="Weiter"></button></div>
              <div class="data" style="left:182px;top:68px;width:45px"><span>Typ</span><span>Zeit</span><span class="teal">ElemRef</span><span class="green">AlterWert</span><span class="green">NeuerWert</span></div>
            </div>
            <div class="mark"><svg><use href="#ni"/></svg><div class="brand"><b>NATIONAL</b><b>INSTRUMENTS<sup>™</sup></b></div><b class="edition">LabVIEW<sup>™</sup>Studentenversion</b></div>
          </div>
          <div class="vbar"><i class="up"></i><div class="track" style="grid-template-rows:21fr 304fr 0fr"><i class="thumb"></i></div><i class="down"></i></div>
        </div>
        <div class="foot"><span class="student">Studentenversion</span><div class="hbar"><i class="back"></i><div class="track" style="grid-template-columns:128fr 1109fr 0fr"><i class="thumb"></i></div><i class="fwd"></i></div><i class="grip"></i></div>
      </div>
    </article>
  </section>

  <svg class="arrows" viewBox="0 0 4096 853" preserveAspectRatio="none" aria-hidden="true">
    <g fill="none" stroke="#000" stroke-width="3.400"><path d="M524 252.500L1181 234.500v9H1838.500v17.700H1181v9.300z"/><path d="M511 254h26.300v172.500H551L524.200 597 497.600 426.500H511z"/></g>
  </svg>
</main>
</body>
</html>
```
FILE: styles.css
```css
* { box-sizing: border-box; }
body { margin: 0; background: #000; font: 8px/10px "Open Sans", "Noto Sans", sans-serif; color: #000; }
button, select { font: inherit; color: inherit; margin: 0; padding: 0; border: 0; background: none; border-radius: 0; appearance: none; }
svg { display: block; }
.defs { position: absolute; width: 0; height: 0; }

.desktop { position: relative; display: grid; grid-template-columns: repeat(3, minmax(0, 1fr)); height: 100vh; overflow: hidden; }
.monitor {
  display: grid; grid-template-rows: 424fr 425fr; gap: 1px; padding: 2px 2px 1px;
  background:
    linear-gradient(90deg, transparent 29%, #4c7a48 29%, #6c9c60 37%, #1c2c1c 47%, #2c5a30 60%, #1c3a20 71%, transparent 71%) top / 100% 2px no-repeat,
    linear-gradient(90deg, transparent 29%, #555 29%, #aab 52%, #4c7a3c 56%, #aab 62%, #2c5a20 71%, transparent 71%) bottom / 100% 1px no-repeat, #000;
}
.with-taskbar { grid-template-rows: 410fr 411fr 28px; padding: 2px 0 0; }
.with-taskbar .window { margin: 0 2px; }

.window { display: flex; flex-direction: column; min-width: 0; min-height: 0; padding: 0 5px 5px; border: 1px solid #eef4fa; border-bottom-color: #555; border-radius: 4px 4px 0 0; background: linear-gradient(#bfcedd, #d8e5f2 21px); }
.focused { background: linear-gradient(#98b3d1, #bad1ea 21px); border-color: #dff; border-bottom-color: #2aa; }
.title { display: flex; align-items: flex-start; gap: 2px; flex: 0 0 20px; padding-top: 6px; }
.logo { width: 11px; height: 11px; }
.title h2 { margin: 1px 0 0 2px; flex: 1; font: inherit; color: #4c5660; }
.focused h2 { color: #111; }
.ctl { width: 21px; height: 12px; border: 1px solid #8794a8; border-radius: 2px; background: linear-gradient(#d0dcea, #b9c9da); }
.ctl svg { width: 100%; height: 100%; }
.focused .ctl { border-color: #54687f; background: linear-gradient(#c6d7ea 50%, #9ab4d0 50%); }
.focused .close { background: linear-gradient(#e09a8c 45%, #c03a20 50%); border-color: #5c1c14; }

.frame { flex: 1; display: flex; flex-direction: column; min-height: 0; border: 1px solid #666; border-right-color: #fff; border-bottom-color: #fff; }
.bars { display: flex; flex: 0 0 33px; border-bottom: 1px solid #555; background: #f0f0f0; }
.left { flex: 1; display: flex; flex-direction: column; }
.menu { display: flex; gap: 10px; height: 15px; padding: 1px 0 0 5px; border-bottom: 1px solid #a0a0a0; }
.menu button { line-height: 11px; }
.tools { display: flex; height: 17px; padding: 2px 2px 0 36px; border-top: 1px solid #fff; }
.tool { width: 16px; height: 14px; margin-right: -1px; border: 1px solid #777; background: #f2f2f2; }
.tool svg { width: 14px; height: 12px; }
.pale { border-color: #bbb; }
.gap { margin-left: 4px; }
.wide { margin-left: 18px; }
.help { margin: 0 0 0 auto; }
.pane { display: flex; align-items: center; justify-content: flex-end; width: 25px; padding-right: 1px; border-left: 1px solid #000; border-bottom: 1px solid #000; }
.vi { width: 22px; height: 22px; }
.digit { font-size: 7px; font-family: "Liberation Sans", sans-serif; }

.body { flex: 1; display: flex; min-height: 0; }
.canvas { position: relative; flex: 1; min-width: 0; overflow: hidden; }
.panel { background: #e2e2e2; --mark: #f0f0f0; }
.diagram { background: #fff; --mark: #fff; }
.vbar { flex: 0 0 12px; display: flex; flex-direction: column; background: #eee; border-left: 1px solid #f8f8f8; }
.track { flex: 1; display: grid; }
.vbar .thumb { grid-row: 2; border: 1px solid #8c8c90; border-radius: 1px; background: linear-gradient(#666, #666) center / 5px 1px no-repeat, linear-gradient(#777, #777) 50% calc(50% - 3px) / 5px 1px no-repeat, linear-gradient(#777, #777) 50% calc(50% + 3px) / 5px 1px no-repeat, linear-gradient(90deg, #f4f4f4, #e0e0e2 50%, #c4c4c8); }
.hbar { flex: 1; display: flex; background: #ededed; border-top: 1px solid #f8f8f8; }
.hbar .thumb { grid-column: 2; border: 1px solid #8c8c90; border-radius: 1px; background: linear-gradient(#666, #666) center / 1px 5px no-repeat, linear-gradient(#777, #777) calc(50% - 3px) 50% / 1px 5px no-repeat, linear-gradient(#777, #777) calc(50% + 3px) 50% / 1px 5px no-repeat, linear-gradient(#f4f4f4, #e0e0e2 50%, #c4c4c8); }
.up, .down { height: 13px; display: grid; place-items: center; }
.back, .fwd { width: 13px; display: grid; place-items: center; }
.up::before { content: ""; border: 3px solid transparent; border-top: 0; border-bottom: 4px solid #333; }
.down::before { content: ""; border: 3px solid transparent; border-bottom: 0; border-top: 4px solid #333; }
.back::before { content: ""; border: 3px solid transparent; border-left: 0; border-right: 4px solid #333; }
.fwd::before { content: ""; border: 3px solid transparent; border-right: 0; border-left: 4px solid #333; }
.foot { flex: 0 0 13px; display: flex; background: #f0f0f0; }
.student { padding: 0 4px; border: 1px solid #000; margin-bottom: 1px; background: #fff; }
.grip { width: 12px; background: radial-gradient(#aaa 1px, transparent 1px) 3px 3px / 3px 3px; clip-path: polygon(90% 30%, 90% 90%, 30% 90%); }

.lbl, .abs, .group, .push, .led, .node, .case, .data, .wires { position: absolute; }
.abs, .wires { left: 0; top: 0; overflow: visible; }
.lbl { white-space: nowrap; }
.led { appearance: none; width: 36px; height: 20px; margin: 0; border: 3px solid; border-color: #c4c4c4 #f4f4f4 #fbfbfb #ccc; border-radius: 50%; background: radial-gradient(ellipse at 38% 30%, #5c8a4c, #24500f 40%, #143806 90%); }
.push { width: 67px; height: 36px; white-space: nowrap; border: 1px solid #484848; background: linear-gradient(#d0d0d0, #b8b8b8 50%, #aaa); box-shadow: inset 2px 2px 1px #ccc, inset -2px -2px 1px #777; }
.push.dark { background: linear-gradient(#a4a4a4, #929292 50%, #848484); box-shadow: inset 2px 2px 1px #777, inset -2px -2px 1px #5c5c5c; }
.push.stop { width: 71px; color: #e8141c; }
.push.small { width: 35px; height: 16px; line-height: 12px; }

.mark { position: absolute; right: 3px; bottom: 4px; width: 226px; display: grid; grid-template-columns: 38px 1fr; color: var(--mark); fill: var(--mark); font-family: "Liberation Sans", sans-serif; filter: drop-shadow(1px 1px 1px #808080); }
.mark svg { width: 42px; height: 40px; grid-row: 1 / 3; grid-column: 1; margin-bottom: -1px; }
.brand { grid-column: 2; display: flex; flex-direction: column; font-size: 17px; line-height: 17px; }
.brand b:first-child { padding-left: 5px; }
.edition { grid-row: 2 / 4; grid-column: 1 / 3; justify-self: end; font-size: 15px; line-height: 20px; }
.mark sup { font-size: 6px; line-height: 6px; vertical-align: 6px; }

.t8 { font-size: 8px; }
.t5 { font-size: 6px; }
.blue { fill: #0000c8; font-weight: 700; }
.tc { font-size: 7px; font-weight: 700; fill: #fff; font-family: "Liberation Serif", serif; }
.tft { font-size: 6px; font-weight: 700; fill: #107a10; }
.node { width: 112px; border: 1px solid #000; background: #fff; display: flex; flex-direction: column; }
.nodehead { height: 12px; display: flex; align-items: center; gap: 2px; background: #ffffcc; white-space: nowrap; }
.nodehead span { flex: 1; text-align: center; }
.mini { width: 7px; height: 11px; flex: none; }
.node select { height: 12px; border-top: 1px solid #000; color: #0e7c7c; text-align: center; text-align-last: center; padding-right: 8px; background: linear-gradient(135deg, #000 50%, transparent 50%) 102px 4px / 3px 3px no-repeat, linear-gradient(225deg, #000 50%, transparent 50%) 105px 4px / 3px 3px no-repeat, linear-gradient(45deg, #000 50%, transparent 50%) 1px 3px / 4px 4px no-repeat; }
.case { display: flex; height: 12px; border: 1px solid #000; background: #fff; }
.case label { color: #888; padding-left: 3px; }
.case select { flex: 1; padding-left: 2px; background: linear-gradient(135deg, #000 50%, transparent 50%) calc(100% - 5px) 3px / 3px 3px no-repeat, linear-gradient(225deg, #000 50%, transparent 50%) calc(100% - 2px) 3px / 3px 3px no-repeat; }
.prev, .next { width: 6px; display: grid; place-items: center; }
.prev { border-right: 1px solid #000; }
.next { border-left: 1px solid #000; }
.prev::before { content: ""; border: 3px solid transparent; border-left: 0; border-right: 4px solid #000; }
.next::before { content: ""; border: 3px solid transparent; border-right: 0; border-left: 4px solid #000; }
.data { display: grid; grid-auto-rows: 12px; line-height: 12px; text-align: center; color: #0000c8; }
.teal { color: #0e7c7c; }
.green { color: #107a10; }

.taskbar { display: flex; gap: 2px; padding-right: 1px; border-top: 1px solid #8098b4; background: linear-gradient(90deg, #7488a4, #a6bfdd 10%, #a6bfdd 85%, #8294ac 88%); }
.task { width: 42px; display: grid; place-items: center; border-radius: 2px; }
.task svg { width: 23px; height: 23px; }
.task.start { width: 39px; }
.task.start svg { width: 26px; height: 26px; }
.task.open { border: 1px solid #6c84a4; background: linear-gradient(135deg, #d0dff0, #b0c6e0); box-shadow: inset 0 0 0 1px #d8e6f6; }
.task.active { background: linear-gradient(135deg, #f0f6fc, #c8d8ea); }
.tray { margin-left: auto; display: flex; align-items: center; gap: 5px; color: #fff; }
.tray svg { width: 12px; height: 16px; }
.tray > span { margin-right: 4px; }
.clock { display: flex; flex-direction: column; gap: 2px; text-align: center; margin: 0 5px; }
.peek { width: 9px; border: 1px solid #54687f; background: linear-gradient(135deg, #a8b8cc, #5c7290); }

.arrows { position: absolute; inset: 0; width: 100%; height: 100%; pointer-events: none; }
```
